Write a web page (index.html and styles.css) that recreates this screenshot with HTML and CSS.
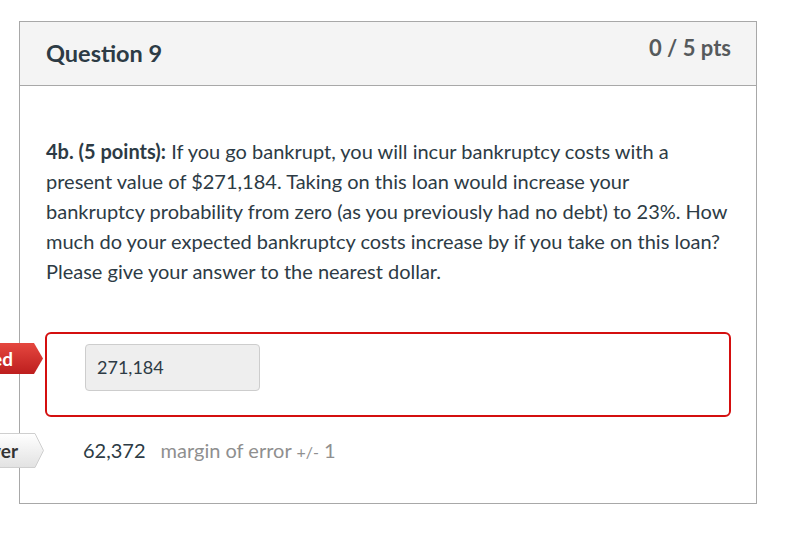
FILE: index.html
```html
<!DOCTYPE html>
<html lang="en">

<head>
    <meta charset="UTF-8">
    <meta name="viewport" content="width=device-width, initial-scale=1.0">
    <title>Question 9</title>
    <link rel="stylesheet" href="styles.css">
</head>

<body>

    <div class="question">
        <div class="question-header">
            <h2 class="question-title">Question 9</h2>
            <div class="question-points">0 / 5 pts</div>
        </div>

        <div class="question-body">
            <p class="question-text">
                <strong>4b. (5 points):</strong> If you go bankrupt, you will incur bankruptcy costs with a
                present value of $271,184. Taking on this loan would increase your
                bankruptcy probability from zero (as you previously had no debt) to 23%. How
                much do your expected bankruptcy costs increase by if you take on this loan?
                Please give your answer to the nearest dollar.
            </p>

            <!-- the answer the student gave, marked wrong -->
            <div class="answer answer-wrong">
                <div class="answer-arrow arrow-wrong">
                    <svg width="120" height="31" viewBox="0 0 120 31">
                        <defs>
                            <linearGradient id="redfill" x1="0" y1="0" x2="0" y2="1">
                                <stop offset="0" stop-color="#e5473f" />
                                <stop offset="1" stop-color="#bd1e1e" />
                            </linearGradient>
                        </defs>
                        <polygon points="0,0 111,0 120,15.5 111,31 0,31" fill="url(#redfill)" />
                    </svg>
                    <span>You Answered</span>
                </div>
                <div class="answer-input">271,184</div>
            </div>

            <!-- the expected answer -->
            <div class="answer answer-correct">
                <div class="answer-arrow arrow-info">
                    <svg width="120" height="35" viewBox="0 0 120 35">
                        <defs>
                            <linearGradient id="grayfill" x1="0" y1="0" x2="0" y2="1">
                                <stop offset="0" stop-color="#ffffff" />
                                <stop offset="1" stop-color="#e2e2e2" />
                            </linearGradient>
                        </defs>
                        <polygon points="0,0.5 111,0.5 119.5,17.5 111,34.5 0,34.5" fill="url(#grayfill)" stroke="#cfcfcf" stroke-width="1" />
                    </svg>
                    <span>Correct Answer</span>
                </div>
                <span class="answer-value">62,372</span>
                <span class="answer-margin">margin of error <small>+/-</small> 1</span>
            </div>
        </div>
    </div>

</body>

</html>
```

FILE: styles.css
```css
body {
    font-family: 'Lato', 'Liberation Sans', sans-serif;
    color: #2d3b45;
    background-color: #fff;
    margin: 0;
}

.question {
    position: relative;
    width: 736px;
    margin: 21px 0 0 19px;
    border: 1px solid #a8a8a8;
}

.question-header {
    display: flex;
    justify-content: space-between;
    align-items: flex-start;
    height: 63px;
    padding: 0 25px 0 26px;
    background-color: #f4f4f4;
    border-bottom: 1px solid #a8a8a8;
}

.question-title {
    margin: 0;
    padding-top: 17px;
    font-size: 23.5px;
    line-height: 1.2;
    font-weight: bold;
}

.question-points {
    padding-top: 13px;
    font-size: 22px;
    line-height: 1.2;
    font-weight: bold;
    color: #565a5c;
}

.question-body {
    padding: 50px 25px 41px 26px;
}

.question-text {
    margin: 0 0 46px;
    font-size: 20px;
    line-height: 30px;
}

.answer {
    position: relative;
}

.answer-wrong {
    margin-left: -1px;
    padding: 10px 38px 24px;
    border: 2px solid #d40f0f;
    border-radius: 6px;
}

.answer-input {
    width: 151px;
    height: 45px;
    padding: 0 11px;
    line-height: 45px;
    font-size: 18px;
    background-color: #eeeeee;
    border: 1px solid #cdcdcd;
    border-radius: 4px;
}

.answer-correct {
    display: flex;
    align-items: baseline;
    padding: 21px 0 0 37px;
    font-size: 20px;
}

.answer-value {
    margin-right: 15px;
}

.answer-margin {
    color: #8f8f8f;
}

.answer-margin small {
    font-size: 16px;
}

/* tags that stick out of the left side of the card */
.answer-arrow {
    position: absolute;
    width: 120px;
    display: flex;
    align-items: center;
    justify-content: flex-end;
}

.answer-arrow svg {
    position: absolute;
    top: 0;
    left: 0;
}

.answer-arrow span {
    position: relative;
    padding-right: 30px;
    font-size: 19px;
    font-weight: bold;
    white-space: nowrap;
}

.arrow-wrong {
    left: -124px;
    top: 9px;
    height: 31px;
}

.arrow-wrong span {
    color: #fff;
}

.arrow-info {
    left: -122px;
    top: 16px;
    height: 35px;
}

.arrow-info span {
    color: #333;
    padding-right: 26px;
}
```
